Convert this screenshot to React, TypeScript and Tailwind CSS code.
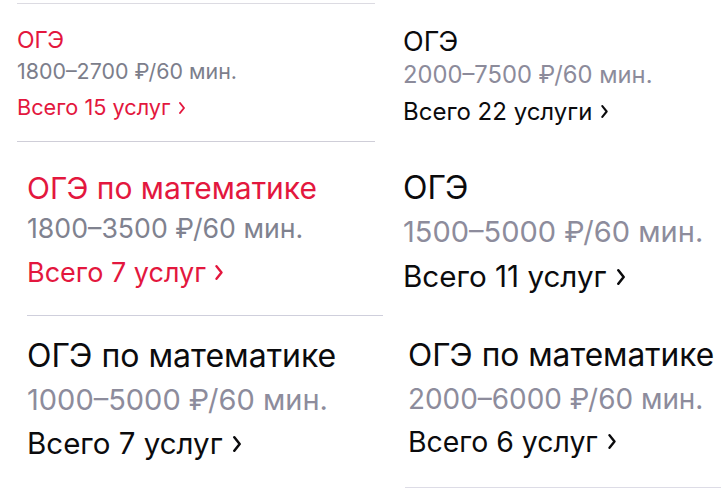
import { ReactNode } from 'react'

type Tone = 'red' | 'black'

type CardProps = {
  title: string
  price: string
  total: string
  tone: Tone
  titleCls: string
  priceCls: string
  totalCls: string
  chevron: string
  children?: ReactNode
}

function Chevron({ className }: { className: string }) {
  return (
    <svg viewBox="0 0 6 12" className={className} fill="none">
      <polyline
        points="1,1 5,6 1,11"
        stroke="currentColor"
        strokeWidth="1.9"
        strokeLinecap="round"
        strokeLinejoin="round"
      />
    </svg>
  )
}

function Card({ title, price, total, tone, titleCls, priceCls, totalCls, chevron, children }: CardProps) {
  const ink = tone === 'red' ? 'text-[#e3173e]' : 'text-[#0b0b0d]'
  return (
    <div>
      <div className={`leading-none whitespace-nowrap ${ink} ${titleCls}`}>{title}</div>
      <div className={`leading-none whitespace-nowrap ${priceCls}`}>{price}</div>
      <div className={`flex items-center leading-none whitespace-nowrap ${ink} ${totalCls}`}>
        <span>{total}</span>
        <Chevron className={chevron} />
      </div>
      {children}
    </div>
  )
}

export default function App() {
  return (
    <div
      className="flex w-[721px] h-[491px] overflow-hidden bg-white"
      style={{ fontFamily: 'Inter, "Noto Sans", sans-serif' }}
    >
      {/* left column */}
      <div className="flex flex-col w-[384px] shrink-0">
        <div className="h-[145px] pl-[17px] pr-[9px]">
          <div className="mt-[3px] h-px bg-[#dcdbe2]" />
          <Card
            tone="red"
            title="ОГЭ"
            price="1800–2700 ₽/60 мин."
            total="Всего 15 услуг"
            titleCls="mt-[25px] text-[23px]"
            priceCls="mt-[9px] text-[21.4px] text-[#7c7e8b]"
            totalCls="mt-[15px] text-[21.7px]"
            chevron="ml-[8px] w-[6px] h-[12px]"
          >
            <div className="mt-[22px] h-px bg-[#cfced8]" />
          </Card>
        </div>

        <div className="h-[171px] pl-[27px] pr-[1px]">
          <Card
            tone="red"
            title="ОГЭ по математике"
            price="1800–3500 ₽/60 мин."
            total="Всего 7 услуг"
            titleCls="mt-[28px] text-[30px]"
            priceCls="mt-[12px] text-[26.7px] text-[#80828f]"
            totalCls="mt-[17px] text-[27px]"
            chevron="ml-[9px] w-[8px] h-[15px]"
          >
            <div className="mt-[29px] h-px bg-[#cfcfdc]" />
          </Card>
        </div>

        <div className="flex-1 pl-[27px]">
          <Card
            tone="black"
            title="ОГЭ по математике"
            price="1000–5000 ₽/60 мин."
            total="Всего 7 услуг"
            titleCls="mt-[24px] text-[32px]"
            priceCls="mt-[13px] text-[29px] text-[#8d8c9c]"
            totalCls="mt-[15px] text-[29.5px]"
            chevron="ml-[10px] w-[8px] h-[16px]"
          />
        </div>
      </div>

      {/* right column */}
      <div className="flex flex-col flex-1">
        <div className="h-[150px] pl-[19px]">
          <Card
            tone="black"
            title="ОГЭ"
            price="2000–7500 ₽/60 мин."
            total="Всего 22 услуги"
            titleCls="mt-[28px] text-[27px]"
            priceCls="mt-[8px] text-[23.75px] text-[#8c8b9b]"
            totalCls="mt-[13px] text-[24px]"
            chevron="ml-[9px] w-[7px] h-[13px]"
          />
        </div>

        <div className="h-[170px] pl-[19px]">
          <Card
            tone="black"
            title="ОГЭ"
            price="1500–5000 ₽/60 мин."
            total="Всего 11 услуг"
            titleCls="mt-[22px] text-[32px]"
            priceCls="mt-[13px] text-[29px] text-[#8d8c9c]"
            totalCls="mt-[16px] text-[29.6px]"
            chevron="ml-[10px] w-[8px] h-[16px]"
          />
        </div>

        <div className="flex-1 pl-[24px]">
          <Card
            tone="black"
            title="ОГЭ по математике"
            price="2000–6000 ₽/60 мин."
            total="Всего 6 услуг"
            titleCls="mt-[19px] text-[31.7px]"
            priceCls="mt-[15px] text-[27.9px] text-[#8d8c9c]"
            totalCls="mt-[14px] text-[28.4px]"
            chevron="ml-[10px] w-[8px] h-[15px]"
          >
            <div className="mt-[31px] -ml-[3px] h-px bg-[#dddce6]" />
          </Card>
        </div>
      </div>
    </div>
  )
}
